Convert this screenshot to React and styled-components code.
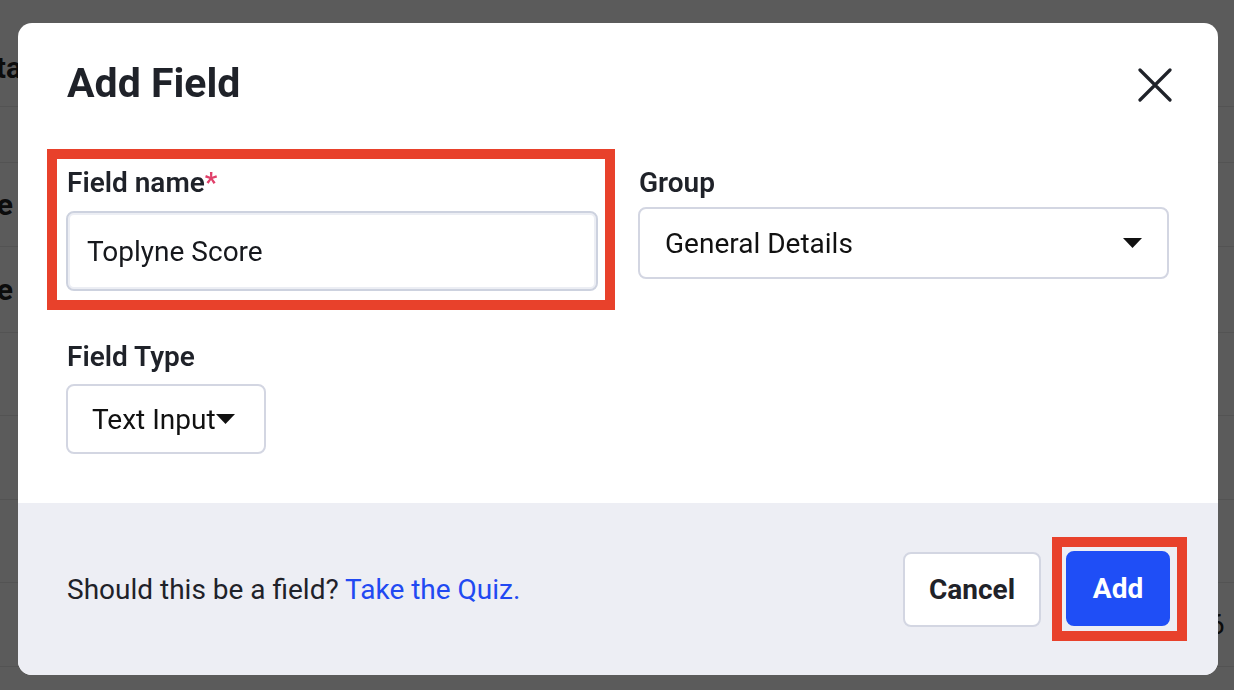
import styled, { createGlobalStyle } from "styled-components";

const GlobalStyle = createGlobalStyle`
  * { box-sizing: border-box; }
  html, body { margin: 0; padding: 0; background: #ffffff; }
  body {
    font-family: Roboto, "Liberation Sans", Arial, sans-serif;
    color: #1f2229;
    overflow: hidden;
  }
`;

// rows of the page behind the dialog: [height, left text, right text]
const pageRows = [
  [107, "Meta", ""],
  [56, "", ""],
  [84, "Name", ""],
  [86, "Type", ""],
  [83, "", ""],
  [84, "", ""],
  [83, "", ""],
  [84, "", "6"],
];

const CloseIcon = () => (
  <svg width="34" height="34" viewBox="0 0 34 34" fill="none">
    <path d="M2 2 L32 32 M32 2 L2 32" stroke="#1f2229" strokeWidth="3.2" strokeLinecap="round" />
  </svg>
);

const Caret = () => (
  <svg width="19" height="10" viewBox="0 0 19 10">
    <path d="M0 0 H19 L9.5 10 Z" fill="#111" />
  </svg>
);

export default function App() {
  return (
    <>
      <GlobalStyle />
      <Page>
        {pageRows.map(([h, left, right], i) => (
          <PageRow key={i} style={{ height: h }} $header={i === 0}>
            <LeftCell $narrow={i !== 0}>{left}</LeftCell>
            <RightCell>{right}</RightCell>
          </PageRow>
        ))}
      </Page>

      <Overlay>
        <Modal>
          <Body>
            <Header>
              <Title>Add Field</Title>
              <CloseButton aria-label="Close">
                <CloseIcon />
              </CloseButton>
            </Header>

            <Fields>
              <Highlight>
                <Label>
                  Field name<Required>*</Required>
                </Label>
                <TextInput defaultValue="Toplyne Score" />
              </Highlight>

              <FieldColumn>
                <Label>Group</Label>
                <Select $wide>
                  <span>General Details</span>
                  <Caret />
                </Select>
              </FieldColumn>

              <FieldColumn>
                <Label>Field Type</Label>
                <Select>
                  <span>Text Input</span>
                  <Caret />
                </Select>
              </FieldColumn>
            </Fields>
          </Body>

          <Footer>
            <Hint>
              Should this be a field? <QuizLink href="#">Take the Quiz.</QuizLink>
            </Hint>
            <Actions>
              <Button>Cancel</Button>
              <Marker>
                <Button $primary>Add</Button>
              </Marker>
            </Actions>
          </Footer>
        </Modal>
      </Overlay>
    </>
  );
}

const Page = styled.div`
  height: 690px;
  overflow: hidden;
  display: flex;
  flex-direction: column;
`;

const PageRow = styled.div`
  flex-shrink: 0;
  display: flex;
  align-items: ${(p) => (p.$header ? "flex-end" : "center")};
  padding-bottom: ${(p) => (p.$header ? "21px" : "0")};
  border-bottom: 1px solid #e9e9e9;
`;

const LeftCell = styled.div`
  width: ${(p) => (p.$narrow ? "13px" : "22px")};
  overflow: hidden;
  display: flex;
  justify-content: flex-end;
  white-space: nowrap;
  font-size: 30px;
  font-weight: 700;
  color: #222;
`;

const RightCell = styled.div`
  margin-left: auto;
  width: 25px;
  font-size: 28px;
  color: #222;
`;

const Overlay = styled.div`
  position: fixed;
  inset: 0;
  background: rgba(0, 0, 0, 0.645);
  display: flex;
  justify-content: center;
  align-items: flex-start;
  padding: 23px 0 0 2px;
`;

const Modal = styled.div`
  width: 1200px;
  height: 652px;
  background: #ffffff;
  border-radius: 14px;
  overflow: hidden;
  display: flex;
  flex-direction: column;
`;

const Body = styled.div`
  flex: 1;
  padding: 36px 49px 0 48px;
`;

const Header = styled.div`
  display: flex;
  align-items: center;
  justify-content: space-between;
  padding-left: 1px;
`;

const Title = styled.h2`
  margin: 0;
  font-size: 41px;
  line-height: 48px;
  font-weight: 700;
  color: #1f2229;
`;

const CloseButton = styled.button`
  border: none;
  background: none;
  padding: 0;
  margin-right: -3px;
  margin-top: 4px;
  display: flex;
  cursor: pointer;
`;

const Fields = styled.div`
  margin-top: 61px;
  display: grid;
  grid-template-columns: 530px 531px;
  column-gap: 42px;
  row-gap: 51px;
  align-items: start;
`;

const FieldColumn = styled.div`
  display: flex;
  flex-direction: column;
  align-items: flex-start;
  gap: 10px;
`;

const Highlight = styled.div`
  display: flex;
  flex-direction: column;
  gap: 13px;
  outline: 10px solid #e8412b;
  outline-offset: 9px;
`;

const Label = styled.div`
  font-size: 28px;
  line-height: 30px;
  font-weight: 600;
  color: #1f2229;
  padding-left: 1px;
`;

const Required = styled.span`
  color: #e0406a;
`;

const TextInput = styled.input`
  width: calc(100% + 2px);
  height: 80px;
  padding: 0 19px;
  border: 2px solid #cdd2df;
  box-shadow: inset 0 0 0 2px #eceef4;
  border-radius: 8px;
  font-family: inherit;
  font-size: 28px;
  color: #16181d;
  outline: none;
`;

const Select = styled.div`
  display: flex;
  align-items: center;
  justify-content: ${(p) => (p.$wide ? "space-between" : "flex-start")};
  width: ${(p) => (p.$wide ? "100%" : "200px")};
  height: ${(p) => (p.$wide ? "72px" : "70px")};
  margin-top: ${(p) => (p.$wide ? "-1px" : "2px")};
  padding: ${(p) => (p.$wide ? "0 25px 0 25px" : "0 0 0 24px")};
  border: 2px solid #d3d6e2;
  border-radius: 8px;
  background: #ffffff;
  font-size: 28px;
  color: #111;

  svg {
    flex-shrink: 0;
  }
`;

const Footer = styled.div`
  height: 172px;
  background: #edeef4;
  display: flex;
  align-items: center;
  justify-content: space-between;
  padding: 0 31px 0 49px;
`;

const Hint = styled.div`
  font-size: 28px;
  color: #1f2229;
`;

const QuizLink = styled.a`
  color: #2149f2;
  text-decoration: none;
`;

const Actions = styled.div`
  display: flex;
  align-items: center;
  gap: 11px;
`;

const Marker = styled.div`
  display: flex;
  border: 10px solid #e8412b;
  padding: 4px 7px 5px 4px;
`;

const Button = styled.button`
  height: 75px;
  width: ${(p) => (p.$primary ? "104px" : "138px")};
  padding: 0;
  border-radius: 8px;
  border: 2px solid ${(p) => (p.$primary ? "#1f4ef6" : "#d3d6e2")};
  background: ${(p) => (p.$primary ? "#1f4ef6" : "#ffffff")};
  color: ${(p) => (p.$primary ? "#ffffff" : "#1f2229")};
  font-family: inherit;
  font-size: 28px;
  font-weight: 700;
  cursor: pointer;
`;
